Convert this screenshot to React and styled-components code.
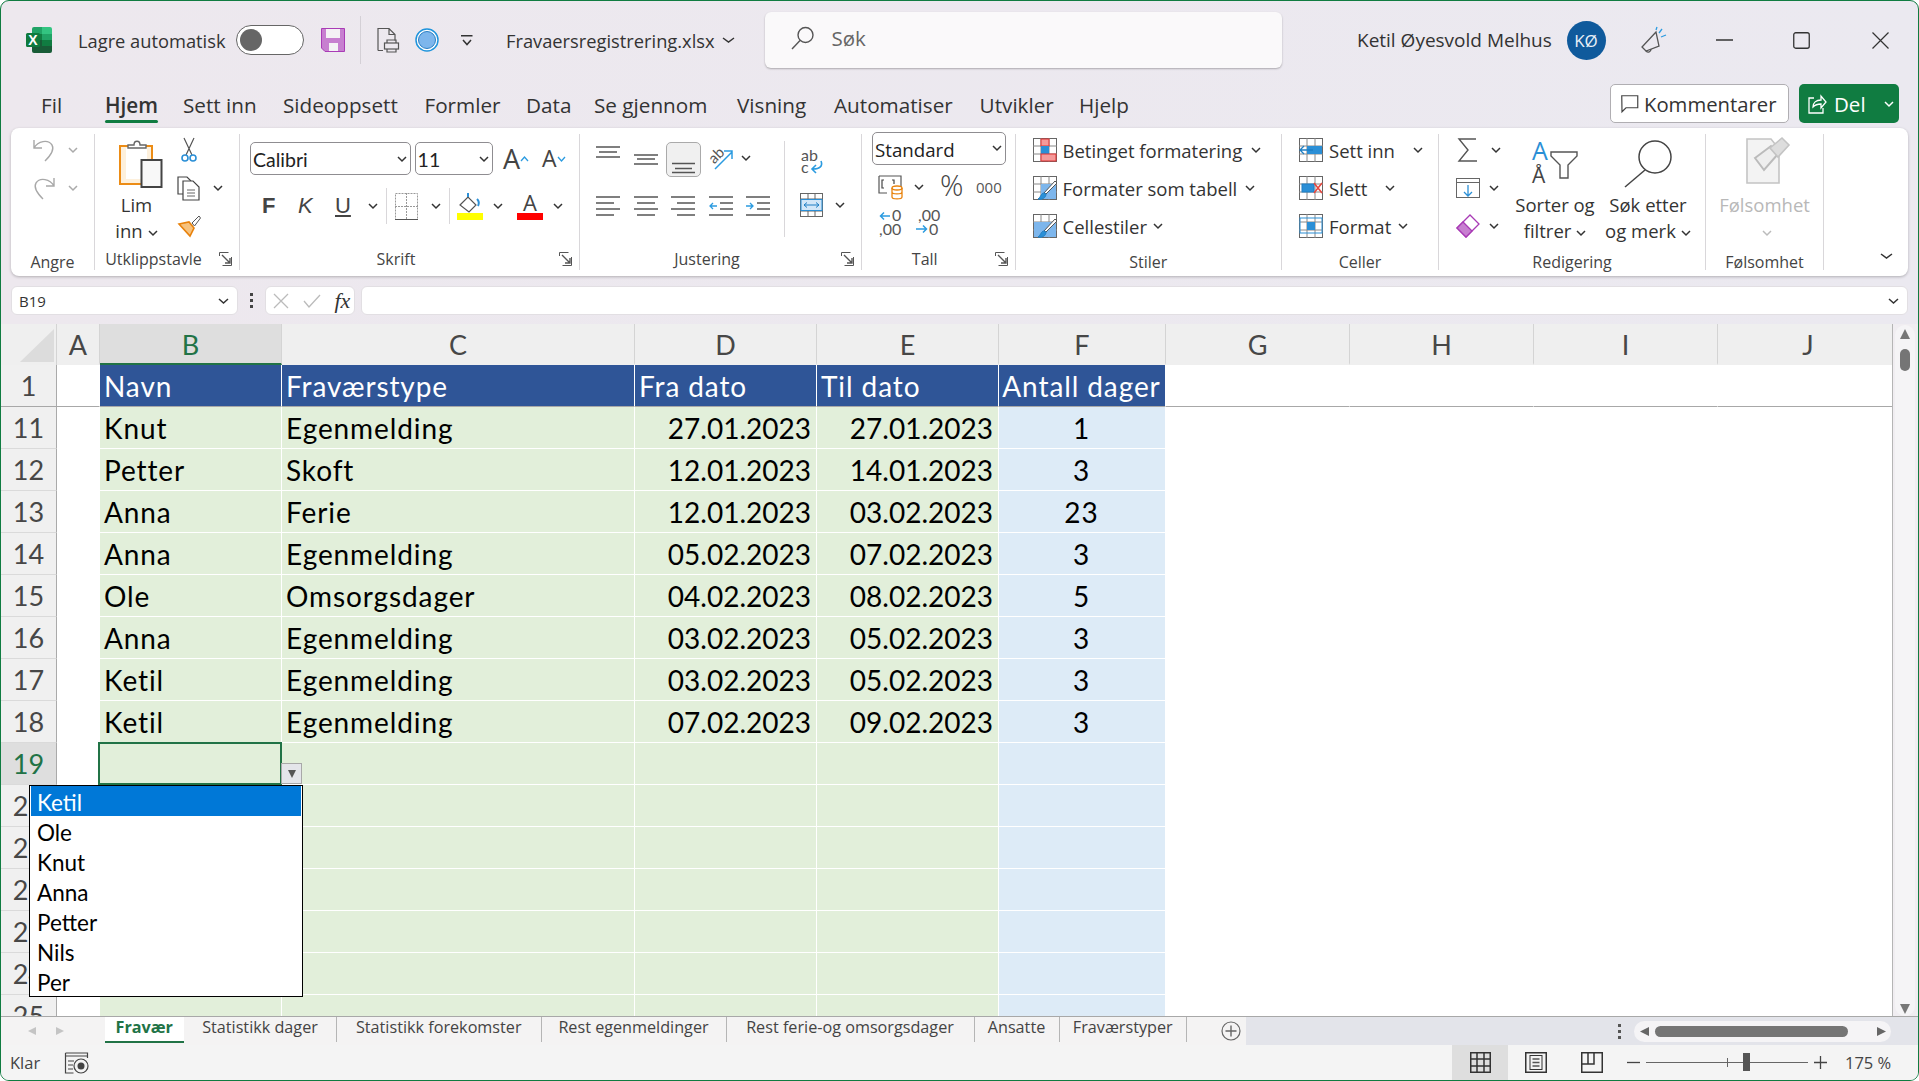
import React from "react";
import styled, { createGlobalStyle } from "styled-components";

const UI = `"Open Sans", "Noto Sans", sans-serif`;
const SHEET = `Lato, "Liberation Sans", sans-serif`;

const Global = createGlobalStyle`
  html, body { margin: 0; padding: 0; background: #fff; overflow: hidden; }
  * { box-sizing: border-box; }
`;

const Window = styled.div`
  width: 1919px;
  height: 1081px;
  display: flex;
  flex-direction: column;
  border: 1px solid #107c41;
  border-radius: 9px;
  overflow: hidden;
  background: linear-gradient(90deg, #ede8ee, #ebe9f0);
  font-family: ${UI};
  color: #333;
`;

/* title bar */
const TitleBar = styled.div`
  height: 78px;
  flex: none;
  display: flex;
  align-items: center;
  padding-left: 25px;
  font-size: 18.3px;
`;

const Slot = styled.div`
  flex: 0 0 ${(p) => p.$w}px;
  margin-left: ${(p) => p.$ml ?? 0}px;
  display: flex;
  align-items: center;
  white-space: nowrap;
`;

const UserName = styled(Slot)`
  font-size: 19px;
`;

const Toggle = styled.div`
  width: 68px;
  height: 30px;
  border: 1.5px solid #666;
  border-radius: 15px;
  background: #fff;
  padding: 3px;
  &::before {
    content: "";
    display: block;
    width: 22px;
    height: 22px;
    border-radius: 50%;
    background: #666;
  }
`;

const TitleSep = styled.div`
  width: 1px;
  height: 48px;
  background: #d4d0d6;
`;

const SearchBox = styled.div`
  width: 517px;
  height: 56px;
  flex: none;
  border-radius: 6px;
  background: #faf9fa;
  box-shadow: 0 1px 2px rgba(0, 0, 0, 0.28);
  display: flex;
  align-items: center;
  padding: 0 0 4px 26px;
  gap: 18px;
  font-size: 20.5px;
  color: #666;
`;

const Avatar = styled.div`
  width: 39px;
  height: 39px;
  border-radius: 50%;
  background: #0f5a9c;
  color: #e8f0f8;
  font-size: 17px;
  display: flex;
  align-items: center;
  justify-content: center;
`;

/* menu row */
const MenuBar = styled.div`
  height: 49px;
  flex: none;
  display: flex;
  padding: 5px 19px 0 40px;
  font-size: 20.7px;
`;

const MenuItem = styled.div`
  flex: 0 0 ${(p) => p.$w}px;
  position: relative;
  height: 40px;
  line-height: 42px;
  white-space: nowrap;
  font-weight: ${(p) => (p.$on ? 600 : 400)};
  ${(p) =>
    p.$on &&
    `&::after {
      content: "";
      position: absolute;
      left: 0;
      bottom: 1px;
      width: 53px;
      height: 3px;
      border-radius: 2px;
      background: #107c41;
    }`}
`;

const MenuRight = styled.div`
  margin-left: auto;
  display: flex;
  gap: 10px;
  height: 39px;
`;

const CommentsButton = styled.div`
  width: 179px;
  border: 1px solid #b0aeb2;
  border-radius: 5px;
  background: #fff;
  display: flex;
  align-items: center;
  padding-left: 10px;
  gap: 5px;
  font-size: 20.3px;
`;

const ShareButton = styled.div`
  width: 100px;
  border-radius: 5px;
  background: #107c41;
  color: #fff;
  display: flex;
  align-items: center;
  padding-left: 9px;
  gap: 7px;
  font-size: 20.5px;
  svg:last-child {
    margin-left: 11px;
  }
`;

/* ribbon */
const Ribbon = styled.div`
  height: 148px;
  flex: none;
  margin: 0 10px;
  padding: 6px 0;
  display: flex;
  background: #fff;
  border-radius: 8px;
  box-shadow: 0 1px 3px rgba(0, 0, 0, 0.25);
  font-size: 18.5px;
`;

const Group = styled.div`
  flex: 0 0 ${(p) => p.$w}px;
  display: flex;
  flex-direction: column;
  border-right: 1px solid #d9d7da;
`;

const GroupBody = styled.div`
  flex: 1;
  display: flex;
  padding: ${(p) => p.$t ?? 4}px 0 0 ${(p) => p.$l ?? 17}px;
  min-height: 0;
`;

const Stack = styled.div`
  flex: ${(p) => (p.$w ? `0 0 ${p.$w}px` : "none")};
  margin-left: ${(p) => p.$ml ?? 0}px;
  display: flex;
  flex-direction: column;
  gap: ${(p) => p.$gap ?? 14}px;
`;

const Row = styled.div`
  display: flex;
  align-items: center;
  height: ${(p) => p.$h ?? 24}px;
  white-space: nowrap;
  padding-left: ${(p) => p.$l ?? 0}px;
  margin-top: ${(p) => p.$mt ?? 0}px;
`;

const Big = styled.div`
  flex: 0 0 ${(p) => p.$w}px;
  display: flex;
  flex-direction: column;
  align-items: center;
  color: ${(p) => (p.$off ? "#b8b8b8" : "inherit")};
`;

const BigIcon = styled.div`
  height: 48px;
  margin-top: ${(p) => p.$mt ?? 2}px;
  margin-left: ${(p) => p.$ml ?? 0}px;
  display: flex;
`;

const BigText = styled.div`
  margin-top: ${(p) => p.$mt ?? 4}px;
  line-height: 26px;
  text-align: center;
  white-space: nowrap;
  svg {
    margin-left: 5px;
    vertical-align: 2px;
  }
`;

const LabelRow = styled.div`
  flex: none;
  height: 16px;
  margin-bottom: ${(p) => (p.$up ? 3 : 0)}px;
  margin-top: ${(p) => (p.$up ? -3 : 0)}px;
  display: grid;
  grid-template-columns: 1fr auto 1fr;
  align-items: center;
  font-size: 16px;
  line-height: 16px;
  color: #444;
  padding-right: ${(p) => (p.$up ? 27 : 0)}px;
  white-space: nowrap;
`;

const Launcher = styled.div`
  grid-column: 3;
  justify-self: end;
  margin-right: -20px;
  display: flex;
`;

const Field = styled.div`
  width: ${(p) => p.$w}px;
  margin-left: ${(p) => p.$ml ?? 0}px;
  height: 33px;
  flex: none;
  border: 1px solid #8f8d91;
  border-radius: 5px;
  background: #fff;
  display: flex;
  align-items: center;
  justify-content: space-between;
  padding: 2px 3px 0 2px;
  font-family: ${SHEET};
  font-size: 19.5px;
  color: #222;
  svg {
    margin-top: -2px;
  }
`;

const NumberField = styled(Field)`
  margin-top: -2px;
  padding-top: 1px;
  font-family: ${UI};
  font-size: 18.7px;
`;

const FontStep = styled.span`
  font-size: ${(p) => p.$s}px;
  line-height: 1;
  color: #444;
`;

const Letter = styled.span`
  font-family: "Liberation Sans", sans-serif;
  font-size: 22px;
  font-weight: ${(p) => (p.$b ? 700 : 400)};
  font-style: ${(p) => (p.$i ? "italic" : "normal")};
  text-decoration: ${(p) => (p.$u ? "underline" : "none")};
  color: #444;
`;

const ToolSep = styled.div`
  width: 1px;
  height: ${(p) => p.$h}px;
  background: #d9d7da;
`;

const SepSlot = styled(Slot)`
  align-self: flex-start;
  margin-top: -1px;
`;

const AlignGrid = styled.div`
  flex: 0 0 187.5px;
  display: grid;
  grid-template-columns: repeat(5, 37.5px);
  grid-template-rows: 35px 28px;
  row-gap: 13px;
  align-items: start;
  justify-items: start;
`;

const PressedTool = styled.div`
  width: 35px;
  height: 35px;
  margin-left: -5px;
  padding-left: 5px;
  border: 1px solid #aaa;
  border-radius: 5px;
  background: #f0f0f0;
  display: flex;
  align-items: center;
`;

const Percent = styled.span`
  font-size: 29px;
  font-weight: 300;
  line-height: 1;
  margin-top: -5px;
  color: #444;
`;

const Thousands = styled.span`
  font-size: 15px;
  color: #555;
`;

const Collapse = styled.div`
  flex: 1;
  display: flex;
  align-items: flex-end;
  justify-content: flex-end;
  padding: 0 15px 11px 0;
`;

/* formula row */
const FormulaRow = styled.div`
  height: 48px;
  flex: none;
  padding: 10px 10px 9px;
  display: flex;
`;

const Plain = styled.div`
  flex: ${(p) => (p.$w ? `0 0 ${p.$w}px` : "1")};
  background: #fff;
  border: 1px solid #e2dfe3;
  border-radius: 6px;
  display: flex;
  align-items: center;
  justify-content: space-between;
  padding: 0 8px 0 7px;
  font-size: 15px;
  color: #333;
`;

const Dots = styled.div`
  flex: 0 0 26.5px;
  display: flex;
  align-items: center;
  justify-content: center;
  color: #555;
`;

const FxTools = styled(Plain)`
  justify-content: flex-start;
  gap: 14px;
  margin-right: 6px;
  padding: 0 0 0 7px;
  font-family: "Liberation Serif", serif;
  font-style: italic;
  font-size: 22px;
`;

/* sheet */
const SheetWrap = styled.div`
  height: 692px;
  flex: none;
  display: flex;
`;

const Sheet = styled.div`
  width: 1892px;
  flex: none;
  background: #fff;
  border-right: 1px solid #b5b5b5;
  overflow: hidden;
  font-family: ${SHEET};
  font-size: 28px;
  color: #000;
`;

const COLS = "56px 43px 182px 353px 182px 182px 167px 184px 184px 184px 175px";

const HeadRow = styled.div`
  display: grid;
  grid-template-columns: ${COLS};
  height: 41px;
  font-size: 27px;
`;

const Corner = styled.div`
  background: #efefef;
  border-right: 1px solid #d4d4d4;
  position: relative;
  &::after {
    content: "";
    position: absolute;
    left: 19px;
    top: 5px;
    width: 34px;
    height: 33px;
    background: #dcdcdc;
    clip-path: polygon(100% 0, 100% 100%, 0 100%);
  }
`;

const ColHead = styled.div`
  display: flex;
  align-items: center;
  justify-content: center;
  padding-top: 1px;
  background: ${(p) => (p.$on ? "#dedede" : "#efefef")};
  color: ${(p) => (p.$on ? "#217346" : "#474747")};
  border-right: 1px solid #d4d4d4;
  border-bottom: 2px solid ${(p) => (p.$on ? "#217346" : "#efefef")};
  &:last-child {
    padding-left: 6px;
  }
`;

const DataRow = styled.div`
  display: grid;
  grid-template-columns: ${COLS};
  height: 42px;
`;

const RowHead = styled.div`
  display: flex;
  align-items: center;
  justify-content: center;
  font-size: 27px;
  background: ${(p) => (p.$on ? "#dedede" : "#f0f0f0")};
  color: ${(p) => (p.$on ? "#217346" : "#474747")};
  border-right: 1px solid #aaa;
  border-bottom: 1px solid ${(p) => (p.$first ? "#a8a8a8" : "#dadada")};
`;

const cellBg = { head: "#2f5597", green: "#e2efda", blue: "#ddebf7", blank: "#fff" };

const Cell = styled.div`
  position: relative;
  display: flex;
  align-items: center;
  justify-content: ${(p) => p.$align ?? "flex-start"};
  padding: 1px 5px 0 4px;
  white-space: nowrap;
  letter-spacing: ${(p) => (p.$align === "flex-end" ? 0 : 0.9)}px;
  background: ${(p) => cellBg[p.$kind]};
  color: ${(p) => (p.$kind === "head" ? "#fff" : "#000")};
  border-bottom: 1px solid ${(p) => (p.$first ? "#a8a8a8" : "#fff")};
  border-right: 1px solid #fff;
`;

const ActiveFrame = styled.div`
  position: absolute;
  inset: -1px -1px -1px -2px;
  border: 2px solid #217346;
  pointer-events: none;
`;

const ListButton = styled.div`
  position: absolute;
  left: 181px;
  top: 20px;
  width: 21px;
  height: 21px;
  background: #e4e5ea;
  border: 1px solid #a8a8a8;
  display: flex;
  align-items: center;
  justify-content: center;
  z-index: 3;
`;

const ListBox = styled.ul`
  position: absolute;
  left: -71px;
  top: 42px;
  width: 274px;
  height: 212px;
  margin: 0;
  padding: 0 1px;
  list-style: none;
  background: #fff;
  border: 1px solid #000;
  font-size: 22.5px;
  letter-spacing: 0;
  z-index: 4;
`;

const ListItem = styled.li`
  height: 30px;
  line-height: 33px;
  padding-left: 6px;
  background: ${(p) => (p.$on ? "#0078d7" : "#fff")};
  color: ${(p) => (p.$on ? "#fff" : "#000")};
`;

const VScroll = styled.div`
  flex: 1;
  display: flex;
  flex-direction: column;
  align-items: center;
  background: #f0edf1;
  padding: 1px 2px 0 0;
`;

const VTrack = styled.div`
  width: 20px;
  height: 100%;
  background: #f5f4f6;
  border-radius: 10px;
  display: flex;
  flex-direction: column;
  align-items: center;
  padding: 4px 0 2px;
`;

const VThumb = styled.div`
  width: 10px;
  height: 22px;
  margin-top: 10px;
  border-radius: 5px;
  background: #757575;
`;

const VGap = styled.span`
  flex: 1;
`;

/* tabs */
const TabBar = styled.div`
  height: 29px;
  flex: none;
  display: flex;
  border-top: 1px solid #a8a8a8;
  background: #e3e4ea;
  font-size: 16.2px;
`;

const TabZone = styled.div`
  flex: 0 0 1245px;
  display: flex;
  background: #f4f3f3;
`;

const TabNav = styled.div`
  flex: 0 0 103.5px;
  display: flex;
  align-items: center;
  gap: 20px;
  padding: 0 0 0 27px;
`;

const Tab = styled.div`
  flex: 0 0 ${(p) => p.$w}px;
  height: ${(p) => (p.$on ? 26 : 25)}px;
  display: flex;
  align-items: center;
  justify-content: center;
  white-space: nowrap;
  padding-bottom: ${(p) => (p.$on ? 4 : 5)}px;
  background: ${(p) => (p.$on ? "#fff" : "transparent")};
  color: ${(p) => (p.$on ? "#217346" : "#444")};
  font-weight: ${(p) => (p.$on ? 700 : 400)};
  border-bottom: ${(p) => (p.$on ? "2px solid #217346" : "none")};
  border-right: ${(p) => (p.$on ? "none" : "1px solid #b5b5b5")};
`;

const AddTab = styled.div`
  flex: 1;
  display: flex;
  align-items: center;
  justify-content: flex-end;
  padding: 0 5px 0 0;
`;

const HScrollZone = styled.div`
  flex: 1;
  display: flex;
  align-items: center;
  padding-left: 372px;
  gap: 13px;
  color: #555;
`;

const HTrack = styled.div`
  width: 257px;
  height: 21px;
  border-radius: 11px;
  background: #f5f4f6;
  display: flex;
  align-items: center;
  justify-content: space-between;
  padding: 0 5px 0 6px;
`;

const HThumb = styled.div`
  flex: 0 0 193px;
  height: 11px;
  margin-left: -23px;
  border-radius: 6px;
  background: #757575;
`;

/* status */
const StatusBar = styled.div`
  flex: 1;
  display: flex;
  align-items: center;
  background: #f4f4f4;
  font-size: 16.5px;
  color: #444;
  padding-left: 9px;
`;

const ViewSlot = styled.div`
  flex: 0 0 ${(p) => p.$w}px;
  height: 35px;
  display: flex;
  align-items: center;
  justify-content: center;
  background: ${(p) => (p.$on ? "#dedede" : "transparent")};
`;

const Zoom = styled.div`
  width: 162px;
  height: 1px;
  background: #666;
  position: relative;
  margin: 0 6px;
`;

const ZoomTick = styled.div`
  position: absolute;
  left: 81px;
  top: -4px;
  width: 1px;
  height: 9px;
  background: #666;
`;

const ZoomThumb = styled.div`
  position: absolute;
  left: 97px;
  top: -9px;
  width: 7px;
  height: 18px;
  background: #555;
`;

/* icons */
const Svg = ({ w, h, children, ...rest }) => (
  <svg width={w} height={h} viewBox={`0 0 ${w} ${h}`} fill="none" overflow="visible" {...rest}>
    {children}
  </svg>
);

const Chev = ({ c = "#333", w = 10 }) => (
  <Svg w={w} h={6} style={{ flex: "none" }}>
    <path d={`M1 1l${w / 2 - 1} 4 ${w / 2 - 1}-4`} stroke={c} strokeWidth="1.5" />
  </Svg>
);

const LaunchIcon = () => (
  <Svg w={13} h={14}>
    <path d="M.5 4V.5h9M12.5 13.5H3.5M12.5 13.5V5" stroke="#555" />
    <path d="M3 3l8 8M11 6v5H6" stroke="#555" strokeWidth="1.4" />
  </Svg>
);

const ExcelLogo = () => (
  <Svg w={26} h={26}>
    <path d="M6 2a2 2 0 0 1 2-2h8v7H6z" fill="#21a366" />
    <path d="M16 0h8a2 2 0 0 1 2 2v5H16z" fill="#33c481" />
    <rect x="6" y="7" width="10" height="6" fill="#107c41" />
    <rect x="16" y="7" width="10" height="6" fill="#21a366" />
    <rect x="6" y="13" width="10" height="6" fill="#185c37" />
    <rect x="16" y="13" width="10" height="6" fill="#107c41" />
    <path d="M6 19h20v5a2 2 0 0 1-2 2H8a2 2 0 0 1-2-2z" fill="#185c37" />
    <rect x="0" y="6" width="14" height="14" rx="1.5" fill="#0e7a3e" />
    <text x="7" y="17.5" textAnchor="middle" fontFamily="Liberation Sans" fontSize="14" fontWeight="700" fill="#fff">X</text>
  </Svg>
);

const SaveIcon = () => (
  <Svg w={24} h={24}>
    <path d="M.5.5h23v23H4L.5 20z" fill="#c77fd0" stroke="#a93bb6" />
    <rect x="5" y="1" width="14" height="9" fill="#f4f2f5" />
    <rect x="8" y="15" width="9" height="8" fill="#f4f2f5" />
  </Svg>
);

const PrintIcon = () => (
  <Svg w={23} h={24}>
    <path d="M1 22.5V.5h11l6 6v6M12 .5v6h6M1 22.5h5" stroke="#555" strokeWidth="1.2" />
    <rect x="7.5" y="15" width="14" height="6" fill="#ede9ef" stroke="#555" strokeWidth="1.2" />
    <path d="M10 15v-3h9v3M10 21v3h9v-3" stroke="#555" strokeWidth="1.2" />
  </Svg>
);

const CircleIcon = () => (
  <Svg w={24} h={24}>
    <circle cx="12" cy="12" r="11" fill="#fff" stroke="#1f94dc" strokeWidth="1.5" />
    <circle cx="12" cy="12" r="8.5" fill="#7db6ec" stroke="#2a7fc4" />
  </Svg>
);

const QatIcon = () => (
  <Svg w={12} h={11}>
    <path d="M0 .75h11.5M2 5l4 4.5L10 5" stroke="#333" strokeWidth="1.5" />
  </Svg>
);

const SearchIcon = () => (
  <Svg w={23} h={24}>
    <circle cx="14.5" cy="9" r="7.5" stroke="#555" strokeWidth="1.4" />
    <path d="M9 14.5L1 23" stroke="#555" strokeWidth="1.4" />
  </Svg>
);

const MegaIcon = () => (
  <Svg w={25} h={26}>
    <path d="M15 5L1 20l4 4 13-5z" stroke="#555" strokeWidth="1.3" />
    <path d="M5 24c2 2 5 1 5-2" stroke="#555" strokeWidth="1.3" />
    <path d="M18 6l3-4M20 10l5-2M15 3l1-3" stroke="#2b9be0" strokeWidth="1.3" />
  </Svg>
);

const CommentIcon = () => (
  <Svg w={18} h={18}>
    <path d="M.75.75h16v12H5l-4 4z" stroke="#444" strokeWidth="1.2" />
  </Svg>
);

const ShareIcon = () => (
  <Svg w={19} h={20}>
    <path d="M6 4H1v15h14v-5" stroke="#fff" strokeWidth="1.3" />
    <path d="M5 13c0-4 3-7 8-7V2l5 6-5 6v-4c-4 0-6 1-8 3z" stroke="#fff" strokeWidth="1.3" />
  </Svg>
);

const UndoIcon = () => (
  <Svg w={22} h={24}>
    <path d="M1 2v8h8M1 10c4-7 14-9 18-3 3 5-2 11-7 16" stroke="#a8a8a8" strokeWidth="1.4" />
  </Svg>
);

const RedoIcon = () => (
  <Svg w={22} h={24}>
    <path d="M21 2v8h-8M21 10c-4-7-14-9-18-3-3 5 2 11 7 16" stroke="#a8a8a8" strokeWidth="1.4" />
  </Svg>
);

const PasteIcon = () => (
  <Svg w={44} h={48}>
    <rect x="1" y="6" width="32" height="38" fill="#fdf0dc" stroke="#ec8c15" strokeWidth="2" />
    <path d="M7 8h21v31H7z" fill="#fff" />
    <path d="M9 8V5h6c0-5 6-5 6 0h6v3z" fill="#fff" stroke="#666" strokeWidth="1.4" />
    <rect x="22.5" y="20" width="20" height="27" fill="#f8f8f8" stroke="#444" strokeWidth="2" />
  </Svg>
);

const CutIcon = () => (
  <Svg w={16} h={24}>
    <path d="M3 0l8 17M13 0L5 17" stroke="#555" strokeWidth="1.2" />
    <circle cx="4" cy="20" r="3" stroke="#2b8fd6" strokeWidth="1.6" />
    <circle cx="12" cy="20" r="3" stroke="#2b8fd6" strokeWidth="1.6" />
  </Svg>
);

const CopyIcon = () => (
  <Svg w={24} h={24}>
    <path d="M6 18H1V1h9l4 4" stroke="#444" strokeWidth="1.2" />
    <path d="M6 5h10l6 6v13H6z" fill="#fff" stroke="#444" strokeWidth="1.2" />
    <path d="M10 14h8M10 17h8M10 20h8" stroke="#666" />
  </Svg>
);

const BrushIcon = () => (
  <Svg w={24} h={22}>
    <path d="M2 9l10-2 5 6-4 8z" fill="#f6c27e" stroke="#e8820c" strokeWidth="1.6" />
    <path d="M15 8l7-7 1.5 2-6 8z" fill="#fff" stroke="#555" />
  </Svg>
);

const BorderIcon = () => (
  <Svg w={23} h={27}>
    <rect x=".5" y=".5" width="22" height="26" stroke="#999" strokeDasharray="2 1" />
    <path d="M11.5 0v27M0 13.5h23" stroke="#999" strokeDasharray="2 1" />
    <path d="M0 26.5h23" stroke="#555" />
  </Svg>
);

const FillIcon = () => (
  <Svg w={26} h={28}>
    <path d="M3 13l8-8 8 8-7 7z" fill="#fff" stroke="#555" strokeWidth="1.2" />
    <path d="M11 5V1M20 7c2 2 2 5 1 7" stroke="#2b8fd6" strokeWidth="2" />
    <rect y="21" width="26" height="7" fill="#ffff00" />
  </Svg>
);

const ColorIcon = () => (
  <Svg w={26} h={28}>
    <text x="13" y="19" textAnchor="middle" fontFamily="Open Sans" fontSize="22" fill="#444">A</text>
    <rect y="21" width="26" height="7" fill="#ff0000" />
  </Svg>
);

const Caret = ({ down }) => (
  <Svg w={9} h={6}>
    <path d={down ? "M1 1l3.5 4L8 1" : "M1 5l3.5-4L8 5"} stroke="#2b9be0" strokeWidth="1.3" />
  </Svg>
);

const Lines = ({ rows, w = 24, h = 26, blue }) => (
  <Svg w={w} h={h}>
    {rows.map(([x1, x2, y], i) => (
      <path key={i} d={`M${x1} ${y}H${x2}`} stroke="#555" strokeWidth="1.3" />
    ))}
    {blue}
  </Svg>
);

const OrientIcon = () => (
  <Svg w={24} h={24}>
    <text x="0" y="12" fontFamily="Lato" fontSize="15" fill="#555" transform="rotate(-45 8 10) translate(0 2)">ab</text>
    <path d="M6 23L23 6M15 5h8v8" stroke="#2b9be0" strokeWidth="1.5" />
  </Svg>
);

const WrapIcon = () => (
  <Svg w={23} h={24}>
    <text x="1" y="11" fontFamily="Lato" fontSize="16" fill="#555">ab</text>
    <text x="1" y="23" fontFamily="Lato" fontSize="16" fill="#555">c</text>
    <path d="M21 11c2 5-1 8-8 8M16 15l-4 4 4 4" stroke="#2b9be0" strokeWidth="1.6" />
  </Svg>
);

const MergeIcon = () => (
  <Svg w={23} h={24}>
    <rect x=".5" y=".5" width="22" height="23" stroke="#666" />
    <path d="M0 6h23M0 18h23M8 0v6M15 0v6M8 18v6M15 18v6" stroke="#666" />
    <rect x="1" y="6.5" width="21" height="11" fill="#d3e7f8" stroke="#2b8fd6" />
    <path d="M4 12h15M7 9.5L4 12l3 2.5M16 9.5l3 2.5-3 2.5" stroke="#1f7fc4" />
  </Svg>
);

const CurrencyIcon = () => (
  <Svg w={25} h={24}>
    <path d="M1 1h22v12M1 1v17h8" stroke="#555" strokeWidth="1.2" />
    <path d="M6 5h-2v8h2M14 5h2v4" stroke="#444" strokeWidth="1.2" />
    <ellipse cx="19" cy="13" rx="5" ry="2" fill="#fff" stroke="#e8820c" strokeWidth="1.3" />
    <path d="M14 13v9c0 2.500 10 2.500 10 0v-9M14 17c0 2.500 10 2.500 10 0" stroke="#e8820c" strokeWidth="1.3" />
  </Svg>
);

const DecIcon = ({ top, bottom, arrowTop }) => (
  <Svg w={26} h={27}>
    <text x={arrowTop ? 13 : 3} y="12" fontFamily="Lato" fontSize="16" fill="#555">{top}</text>
    <text x={arrowTop ? 0 : 14} y="26" fontFamily="Lato" fontSize="16" fill="#555">{bottom}</text>
    {arrowTop ? (
      <path d="M11 7H2M5 3.500L1.500 7 5 10.500" stroke="#2b9be0" strokeWidth="1.5" />
    ) : (
      <path d="M1 20h10M8 16.500l3.500 3.500L8 23.500" stroke="#2b9be0" strokeWidth="1.5" />
    )}
  </Svg>
);

const GridIcon = ({ children }) => (
  <Svg w={24} h={24} style={{ flex: "none" }}>
    <rect x=".5" y=".5" width="23" height="23" fill="#fff" stroke="#666" />
    <path d="M8 0v24M16 0v24M0 8h24M0 16h24" stroke="#888" />
    {children}
  </Svg>
);

const CondIcon = () => (
  <GridIcon>
    <rect x="8" y="1" width="8" height="7" fill="#f59a9a" stroke="#d33" />
    <rect x="8" y="8" width="8" height="8" fill="#2b8fd6" />
    <rect x="8" y="16" width="15" height="7" fill="#f59a9a" stroke="#d33" />
  </GridIcon>
);

const PaintOver = () => (
  <>
    <path d="M24 7L13 18l-2-1 11-12z" fill="#fff" stroke="#555" />
    <path d="M11 17c-3 0-3 4-6 6 4 1 8-1 8-5z" fill="#2b8fd6" stroke="#1f7fc4" />
  </>
);

const TableIcon = () => (
  <GridIcon>
    <rect x="8" y="8" width="15" height="15" fill="#7db6ec" />
    <PaintOver />
  </GridIcon>
);

const StyleIcon = () => (
  <GridIcon>
    <rect x="1" y="8" width="22" height="15" fill="#7db6ec" />
    <PaintOver />
  </GridIcon>
);

const InsertIcon = () => (
  <GridIcon>
    <rect x="8" y="8" width="15" height="8" fill="#2b8fd6" />
    <path d="M14 12H1M5 8l-4 4 4 4" stroke="#1f7fc4" fill="#fff" strokeWidth="1.3" />
  </GridIcon>
);

const DeleteIcon = () => (
  <GridIcon>
    <rect x="3" y="8" width="12" height="8" fill="#2b8fd6" stroke="#1f7fc4" />
    <path d="M15 7l8 10M23 7l-8 10" stroke="#e8483f" strokeWidth="1.6" />
  </GridIcon>
);

const FormatIcon = () => (
  <GridIcon>
    <rect x="8" y="8" width="8" height="8" fill="#2b8fd6" />
    <rect x="1" y="4" width="22" height="15" stroke="#2b8fd6" strokeWidth="1" />
  </GridIcon>
);

const SigmaIcon = () => (
  <Svg w={20} h={24}>
    <path d="M18 1H1l9 11-9 11h18" stroke="#555" strokeWidth="1.4" />
  </Svg>
);

const FillDownIcon = () => (
  <Svg w={24} h={20}>
    <rect x=".5" y=".5" width="23" height="19" stroke="#666" />
    <path d="M0 4.500h24" stroke="#666" />
    <path d="M12 7v11M8 14l4 4 4-4" stroke="#2b8fd6" strokeWidth="1.3" />
  </Svg>
);

const EraserIcon = () => (
  <Svg w={24} h={24}>
    <path d="M1 14L14 1l9 9-13 13z" fill="#fff" stroke="#a83ab5" strokeWidth="1.3" />
    <path d="M1 14l6-6 9 9-6 6z" fill="#c77fd0" stroke="#a83ab5" strokeWidth="1.3" />
  </Svg>
);

const SortIcon = () => (
  <Svg w={46} h={44}>
    <text x="0" y="20" fontFamily="Open Sans" fontSize="25" fill="#2b8fd6">A</text>
    <text x="0" y="43" fontFamily="Open Sans" fontSize="21" fill="#444">Å</text>
    <path d="M19 12h26v4l-9 9v13h-8V25l-9-9z" fill="#fff" stroke="#555" strokeWidth="1.4" />
  </Svg>
);

const FindIcon = () => (
  <Svg w={48} h={48}>
    <circle cx="31" cy="17" r="16" stroke="#444" strokeWidth="1.5" />
    <path d="M21 30L1 47" stroke="#444" strokeWidth="1.5" />
  </Svg>
);

const SensitivityIcon = () => (
  <Svg w={44} h={48}>
    <path d="M1 3h24l8 10v34H1z" fill="#f3f3f3" stroke="#c4c4c4" strokeWidth="1.6" />
    <path d="M9 22l16-12 7 8-14 16z" fill="#eee" stroke="#bbb" strokeWidth="2" />
    <path d="M24 12L36 2l7 7-11 12z" fill="#ddd" stroke="#c4c4c4" strokeWidth="1.6" />
  </Svg>
);

const Tri = ({ dir = "down", c = "#777", s = 10 }) => {
  const d = {
    down: `M0 0H${s}L${s / 2} ${s}z`,
    up: `M0 ${s}H${s}L${s / 2} 0z`,
    left: `M${s} 0V${s}L0 ${s / 2}z`,
    right: `M0 0V${s}L${s} ${s / 2}z`,
  }[dir];
  return (
    <Svg w={s} h={s} style={{ flex: "none" }}>
      <path d={d} fill={c} />
    </Svg>
  );
};

const CloseGlyph = () => (
  <Svg w={17} h={17}>
    <path d="M.5.5l16 16M16.500.5l-16 16" stroke="#333" strokeWidth="1.2" />
  </Svg>
);

const MacroIcon = () => (
  <Svg w={24} h={22}>
    <path d="M.5 1h22v5M.5 1v20h8" stroke="#444" strokeWidth="1.2" />
    <path d="M1 4h21M3 9h6M3 13h5M3 17h5" stroke="#444" strokeWidth="1.2" />
    <circle cx="16" cy="14" r="7" stroke="#444" strokeWidth="1.2" />
    <circle cx="16" cy="14" r="3.500" fill="#444" />
  </Svg>
);

const NormalView = () => (
  <Svg w={21} h={21}>
    <rect x=".75" y=".75" width="19.500" height="19.500" stroke="#333" strokeWidth="1.5" />
    <path d="M7 0v21M14 0v21M0 7h21M0 14h21" stroke="#333" strokeWidth="1.5" />
  </Svg>
);

const PageView = () => (
  <Svg w={22} h={21}>
    <rect x=".75" y=".75" width="20.500" height="19.500" stroke="#333" strokeWidth="1.5" />
    <rect x="5" y="3.500" width="12" height="14" stroke="#333" />
    <path d="M7.500 7h7M7.500 10.500h7M7.500 14h7" stroke="#555" strokeWidth="1.400" />
  </Svg>
);

const BreakView = () => (
  <Svg w={22} h={21}>
    <rect x=".75" y=".75" width="20.500" height="19.500" stroke="#333" strokeWidth="1.5" />
    <path d="M1 12h12V1M7 1v11" stroke="#333" strokeWidth="1.5" />
  </Svg>
);

const PlusMinus = ({ plus }) => (
  <Svg w={13} h={13}>
    <path d={plus ? "M0 6.500h13M6.500 0v13" : "M0 6.500h13"} stroke="#444" strokeWidth="1.3" />
  </Svg>
);

const VDots = ({ c = "#444" }) => (
  <Svg w={3} h={15}>
    <path d="M1.500 0v3M1.500 6v3M1.500 12v3" stroke={c} strokeWidth="3" />
  </Svg>
);

/* data */
const menu = [
  ["Fil", 64], ["Hjem", 78], ["Sett inn", 100], ["Sideoppsett", 141.500], ["Formler", 101.500],
  ["Data", 68], ["Se gjennom", 143], ["Visning", 97], ["Automatiser", 145.600], ["Utvikler", 99.400], ["Hjelp", 60],
];

const columns = ["A", "B", "C", "D", "E", "F", "G", "H", "I", "J"];

const rows = [
  [11, "Knut", "Egenmelding", "27.01.2023", "27.01.2023", "1"],
  [12, "Petter", "Skoft", "12.01.2023", "14.01.2023", "3"],
  [13, "Anna", "Ferie", "12.01.2023", "03.02.2023", "23"],
  [14, "Anna", "Egenmelding", "05.02.2023", "07.02.2023", "3"],
  [15, "Ole", "Omsorgsdager", "04.02.2023", "08.02.2023", "5"],
  [16, "Anna", "Egenmelding", "03.02.2023", "05.02.2023", "3"],
  [17, "Ketil", "Egenmelding", "03.02.2023", "05.02.2023", "3"],
  [18, "Ketil", "Egenmelding", "07.02.2023", "09.02.2023", "3"],
  [19, "", "", "", "", ""],
  [20, "", "", "", "", ""],
  [21, "", "", "", "", ""],
  [22, "", "", "", "", ""],
  [23, "", "", "", "", ""],
  [24, "", "", "", "", ""],
  [25, "", "", "", "", ""],
];

const names = ["Ketil", "Ole", "Knut", "Anna", "Petter", "Nils", "Per"];

const tabs = [
  ["Fravær", 79.500], ["Statistikk dager", 153], ["Statistikk forekomster", 204.500],
  ["Rest egenmeldinger", 185], ["Rest ferie-og omsorgsdager", 248], ["Ansatte", 85], ["Fraværstyper", 127.500],
];

const stiler = [
  [<CondIcon key="a" />, "Betinget formatering", 188],
  [<TableIcon key="b" />, "Formater som tabell", 182],
  [<StyleIcon key="c" />, "Cellestiler", 90],
];

const celler = [
  [<InsertIcon key="a" />, "Sett inn", 84],
  [<DeleteIcon key="b" />, "Slett", 56],
  [<FormatIcon key="c" />, "Format", 69],
];

const Label = ({ children, launcher }) => (
  <LabelRow $up={launcher}>
    <span />
    <span>{children}</span>
    {launcher && (
      <Launcher>
        <LaunchIcon />
      </Launcher>
    )}
  </LabelRow>
);

const NamedRows = ({ items }) => (
  <Stack>
    {items.map(([icon, text, w]) => (
      <Row key={text}>
        {icon}
        <Slot $w={w} $ml={6}>{text}</Slot>
        <Chev />
      </Row>
    ))}
  </Stack>
);

const App = () => (
  <Window>
    <Global />
    <TitleBar>
      <Slot $w={52}><ExcelLogo /></Slot>
      <Slot $w={158}>Lagre automatisk</Slot>
      <Slot $w={85}><Toggle /></Slot>
      <Slot $w={39}><SaveIcon /></Slot>
      <Slot $w={17}><TitleSep /></Slot>
      <Slot $w={38}><PrintIcon /></Slot>
      <Slot $w={46}><CircleIcon /></Slot>
      <Slot $w={45}><QatIcon /></Slot>
      <Slot $w={216}>Fravaersregistrering.xlsx</Slot>
      <Slot $w={42.500}><Chev w={13} /></Slot>
      <SearchBox>
        <SearchIcon />
        Søk
      </SearchBox>
      <UserName $w={209.500} $ml={75.500}>Ketil Øyesvold Melhus</UserName>
      <Slot $w={74}><Avatar>KØ</Avatar></Slot>
      <Slot $w={75}><MegaIcon /></Slot>
      <Slot $w={77}>
        <Svg w={17} h={2}><path d="M0 1h17" stroke="#333" strokeWidth="1.4" /></Svg>
      </Slot>
      <Slot $w={79}>
        <Svg w={17} h={17}><rect x=".75" y=".75" width="15.500" height="15.500" rx="2" stroke="#333" strokeWidth="1.3" /></Svg>
      </Slot>
      <Slot $w={17}><CloseGlyph /></Slot>
    </TitleBar>

    <MenuBar>
      {menu.map(([label, w]) => (
        <MenuItem key={label} $w={w} $on={label === "Hjem"}>{label}</MenuItem>
      ))}
      <MenuRight>
        <CommentsButton><CommentIcon />Kommentarer</CommentsButton>
        <ShareButton>
          <ShareIcon />
          Del
          <Chev c="#fff" />
        </ShareButton>
      </MenuRight>
    </MenuBar>

    <Ribbon>
      <Group $w={84}>
        <GroupBody $l={22}>
          <Stack>
            <Row><Slot $w={34.500}><UndoIcon /></Slot><Chev c="#aaa" /></Row>
            <Row><Slot $w={34.500}><RedoIcon /></Slot><Chev c="#aaa" /></Row>
          </Stack>
        </GroupBody>
        <Label>Angre</Label>
      </Group>

      <Group $w={145}>
        <GroupBody $l={9}>
          <Big $w={65}>
            <BigIcon $ml={8}><PasteIcon /></BigIcon>
            <BigText>Lim<br />inn<Chev /></BigText>
          </Big>
          <Stack $ml={8}>
            <Row $l={4}><CutIcon /></Row>
            <Row><Slot $w={36}><CopyIcon /></Slot><Chev /></Row>
            <Row><BrushIcon /></Row>
          </Stack>
        </GroupBody>
        <Label launcher>Utklippstavle</Label>
      </Group>

      <Group $w={340}>
        <GroupBody $l={10} $t={8}>
          <Stack $gap={17}>
            <Row $h={33}>
              <Field $w={161}>Calibri<Chev /></Field>
              <Field $w={78.400} $ml={3.600}>11<Chev /></Field>
              <Slot $w={39} $ml={10}>
                <FontStep $s={27}>A</FontStep><Caret />
              </Slot>
              <Slot $w={30}>
                <FontStep $s={23}>A</FontStep><Caret down />
              </Slot>
            </Row>
            <Row $h={28} $l={12}>
              <Slot $w={36}><Letter $b>F</Letter></Slot>
              <Slot $w={37}><Letter $i>K</Letter></Slot>
              <Slot $w={33}><Letter $u>U</Letter></Slot>
              <Slot $w={18}><Chev /></Slot>
              <Slot $w={9}><ToolSep $h={36} /></Slot>
              <Slot $w={36}><BorderIcon /></Slot>
              <Slot $w={18}><Chev /></Slot>
              <Slot $w={8}><ToolSep $h={36} /></Slot>
              <Slot $w={36}><FillIcon /></Slot>
              <Slot $w={24}><Chev /></Slot>
              <Slot $w={36}><ColorIcon /></Slot>
              <Chev />
            </Row>
          </Stack>
        </GroupBody>
        <Label launcher>Skrift</Label>
      </Group>

      <Group $w={282}>
        <GroupBody $l={16} $t={8}>
          <AlignGrid>
            <Lines rows={[[0, 24, 5], [3, 21, 10], [0, 24, 15]]} />
            <Lines rows={[[0, 24, 13], [3, 21, 17], [0, 24, 22]]} />
            <PressedTool><Lines rows={[[0, 23, 16.500], [3, 20, 21.500], [0, 23, 25.500]]} /></PressedTool>
            <Row $mt={4}><Slot $w={32}><OrientIcon /></Slot><Chev /></Row>
            <span />
            <Lines rows={[[0, 24, 7], [0, 18, 13], [0, 24, 19], [0, 18, 25]]} />
            <Lines rows={[[0, 24, 7], [3, 21, 13], [0, 24, 19], [3, 21, 25]]} />
            <Lines rows={[[0, 24, 7], [6, 24, 13], [0, 24, 19], [6, 24, 25]]} />
            <Lines
              rows={[[0, 24, 7], [11, 24, 13], [11, 24, 19], [0, 24, 25]]}
              blue={<path d="M8 16H1M4 13l-3 3 3 3" stroke="#2b9be0" strokeWidth="1.300" />}
            />
            <Lines
              rows={[[0, 24, 7], [11, 24, 13], [11, 24, 19], [0, 24, 25]]}
              blue={<path d="M0 16h7M4 13l3 3-3 3" stroke="#2b9be0" strokeWidth="1.300" />}
            />
          </AlignGrid>
          <SepSlot $w={16}><ToolSep $h={96} /></SepSlot>
          <Stack $gap={13}>
            <Row $h={30} $mt={5}><WrapIcon /></Row>
            <Row $h={30}>
              <Slot $w={35}><MergeIcon /></Slot>
              <Chev />
            </Row>
          </Stack>
        </GroupBody>
        <Label launcher>Justering</Label>
      </Group>

      <Group $w={153.500}>
        <GroupBody $l={10} $t={0}>
          <Stack $gap={10}>
            <NumberField $w={133.500}>Standard<Chev /></NumberField>
            <Row $l={6}>
              <Slot $w={36}><CurrencyIcon /></Slot>
              <Slot $w={26}><Chev /></Slot>
              <Slot $w={36}><Percent>%</Percent></Slot>
              <Thousands>000</Thousands>
            </Row>
            <Row $h={27} $l={7}>
              <Slot $w={36}><DecIcon top="0" bottom=",00" arrowTop /></Slot>
              <DecIcon top=",00" bottom="0" />
            </Row>
          </Stack>
        </GroupBody>
        <Label launcher>Tall</Label>
      </Group>

      <Group $w={266.500}>
        <GroupBody>
          <NamedRows items={stiler} />
        </GroupBody>
        <Label>Stiler</Label>
      </Group>

      <Group $w={157}>
        <GroupBody>
          <NamedRows items={celler} />
        </GroupBody>
        <Label>Celler</Label>
      </Group>

      <Group $w={267}>
        <GroupBody>
          <Stack $w={54}>
            <Row $l={2}><Slot $w={33}><SigmaIcon /></Slot><Chev /></Row>
            <Row><Slot $w={33}><FillDownIcon /></Slot><Chev /></Row>
            <Row><Slot $w={33}><EraserIcon /></Slot><Chev /></Row>
          </Stack>
          <Big $w={90}>
            <BigIcon><SortIcon /></BigIcon>
            <BigText>Sorter og<br />filtrer<Chev /></BigText>
          </Big>
          <Big $w={96}>
            <BigIcon><FindIcon /></BigIcon>
            <BigText>Søk etter<br />og merk<Chev /></BigText>
          </Big>
        </GroupBody>
        <Label>Redigering</Label>
      </Group>

      <Group $w={117.500}>
        <GroupBody $l={0}>
          <Big $w={117} $off>
            <BigIcon $mt={-2} $ml={7}><SensitivityIcon /></BigIcon>
            <BigText $mt={8}>Følsomhet<br /><Chev c="#bbb" /></BigText>
          </Big>
        </GroupBody>
        <Label>Følsomhet</Label>
      </Group>

      <Collapse><Chev w={13} /></Collapse>
    </Ribbon>

    <FormulaRow>
      <Plain $w={227}>B19<Chev w={11} /></Plain>
      <Dots><VDots /></Dots>
      <FxTools $w={90.500}>
        <Svg w={16} h={16}><path d="M1 1l14 14M15 1L1 15" stroke="#bbb" strokeWidth="1.300" /></Svg>
        <Svg w={18} h={14}><path d="M1 7l5 6L17 1" stroke="#bbb" strokeWidth="1.300" /></Svg>
        fx
      </FxTools>
      <Plain><span /><Chev w={11} /></Plain>
    </FormulaRow>

    <SheetWrap>
      <Sheet>
        <HeadRow>
          <Corner />
          {columns.map((c) => (
            <ColHead key={c} $on={c === "B"}>{c}</ColHead>
          ))}
        </HeadRow>
        <DataRow>
          <RowHead $first>1</RowHead>
          <Cell $kind="blank" $first />
          <Cell $kind="head" $first>Navn</Cell>
          <Cell $kind="head" $first>Fraværstype</Cell>
          <Cell $kind="head" $first>Fra dato</Cell>
          <Cell $kind="head" $first>Til dato</Cell>
          <Cell $kind="head" $first $align="center">Antall dager</Cell>
          <Cell $kind="blank" $first />
          <Cell $kind="blank" $first />
          <Cell $kind="blank" $first />
          <Cell $kind="blank" $first />
        </DataRow>
        {rows.map(([n, name, type, from, to, days]) => (
          <DataRow key={n}>
            <RowHead $on={n === 19}>{n}</RowHead>
            <Cell $kind="blank" />
            <Cell $kind="green">
              {name}
              {n === 19 && (
                <>
                  <ActiveFrame />
                  <ListButton><Tri s={8} c="#555" /></ListButton>
                  <ListBox>
                    {names.map((item, i) => (
                      <ListItem key={item} $on={i === 0}>{item}</ListItem>
                    ))}
                  </ListBox>
                </>
              )}
            </Cell>
            <Cell $kind="green">{type}</Cell>
            <Cell $kind="green" $align="flex-end">{from}</Cell>
            <Cell $kind="green" $align="flex-end">{to}</Cell>
            <Cell $kind="blue" $align="center">{days}</Cell>
            <Cell $kind="blank" />
            <Cell $kind="blank" />
            <Cell $kind="blank" />
            <Cell $kind="blank" />
          </DataRow>
        ))}
      </Sheet>
      <VScroll>
        <VTrack>
          <Tri dir="up" c="#777" s={10} />
          <VThumb />
          <VGap />
          <Tri dir="down" c="#777" s={10} />
        </VTrack>
      </VScroll>
    </SheetWrap>

    <TabBar>
      <TabZone>
        <TabNav>
          <Tri dir="left" c="#c4c4c4" s={8} />
          <Tri dir="right" c="#c4c4c4" s={8} />
        </TabNav>
        {tabs.map(([label, w], i) => (
          <Tab key={label} $w={w} $on={i === 0}>{label}</Tab>
        ))}
        <AddTab>
          <Svg w={20} h={20}>
            <circle cx="10" cy="10" r="9" stroke="#666" strokeWidth="1.200" />
            <path d="M4.500 10h11M10 4.500v11" stroke="#666" strokeWidth="1.400" />
          </Svg>
        </AddTab>
      </TabZone>
      <HScrollZone>
        <VDots c="#555" />
        <HTrack>
          <Tri dir="left" c="#666" s={9} />
          <HThumb />
          <Tri dir="right" c="#666" s={9} />
        </HTrack>
      </HScrollZone>
    </TabBar>

    <StatusBar>
      <Slot $w={55}>Klar</Slot>
      <Slot $w={1387}><MacroIcon /></Slot>
      <ViewSlot $w={56} $on><NormalView /></ViewSlot>
      <ViewSlot $w={56}><PageView /></ViewSlot>
      <ViewSlot $w={56}><BreakView /></ViewSlot>
      <Slot $w={218} $ml={7}>
        <PlusMinus />
        <Zoom><ZoomTick /><ZoomThumb /></Zoom>
        <PlusMinus plus />
      </Slot>
      <Slot $w={60}>175 %</Slot>
    </StatusBar>
  </Window>
);

export default App;
